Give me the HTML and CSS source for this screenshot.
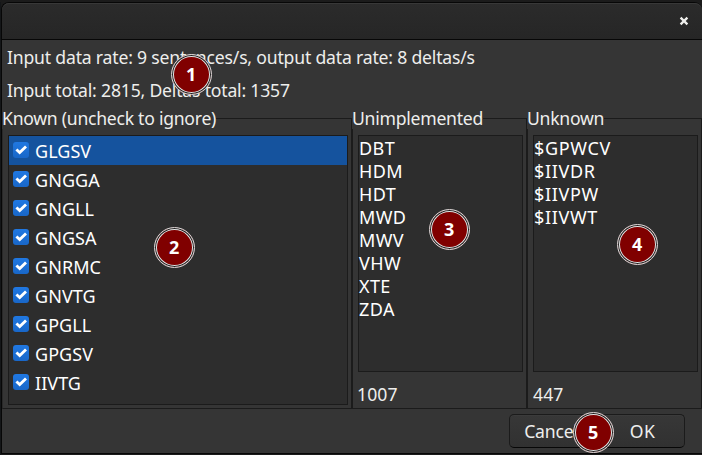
FILE: index.html
```html
<!DOCTYPE html>
<html lang="en">
<head>
<meta charset="utf-8">
<title>NMEA sentences</title>
<link rel="stylesheet" href="styles.css">
</head>
<body>
<div class="edge"></div>
<main class="dialog">
  <header class="titlebar">
    <svg class="close" viewBox="0 0 10 10"><path d="M1.6 1.6 8.4 8.4M8.4 1.6 1.6 8.4"/></svg>
  </header>
  <div class="stats">
    <p>Input data rate: 9 sentences/s, output data rate: 8 deltas/s</p>
    <p>Input total: 2815, Deltas total: 1357</p>
  </div>
  <div class="frames">
    <section class="frame known">
      <h2>Known (uncheck to ignore)</h2>
      <ul class="list checks">
        <li class="selected"><svg class="check" viewBox="0 0 16 16"><path d="M3.4 7.5 6.7 10.6 13 4.4"/></svg>GLGSV</li>
        <li><svg class="check" viewBox="0 0 16 16"><path d="M3.4 7.5 6.7 10.6 13 4.4"/></svg>GNGGA</li>
        <li><svg class="check" viewBox="0 0 16 16"><path d="M3.4 7.5 6.7 10.6 13 4.4"/></svg>GNGLL</li>
        <li><svg class="check" viewBox="0 0 16 16"><path d="M3.4 7.5 6.7 10.6 13 4.4"/></svg>GNGSA</li>
        <li><svg class="check" viewBox="0 0 16 16"><path d="M3.4 7.5 6.7 10.6 13 4.4"/></svg>GNRMC</li>
        <li><svg class="check" viewBox="0 0 16 16"><path d="M3.4 7.5 6.7 10.6 13 4.4"/></svg>GNVTG</li>
        <li><svg class="check" viewBox="0 0 16 16"><path d="M3.4 7.5 6.7 10.6 13 4.4"/></svg>GPGLL</li>
        <li><svg class="check" viewBox="0 0 16 16"><path d="M3.4 7.5 6.7 10.6 13 4.4"/></svg>GPGSV</li>
        <li><svg class="check" viewBox="0 0 16 16"><path d="M3.4 7.5 6.7 10.6 13 4.4"/></svg>IIVTG</li>
      </ul>
    </section>
    <section class="frame">
      <h2>Unimplemented</h2>
      <ul class="list">
        <li>DBT</li><li>HDM</li><li>HDT</li><li>MWD</li><li>MWV</li><li>VHW</li><li>XTE</li><li>ZDA</li>
      </ul>
      <p class="count">1007</p>
    </section>
    <section class="frame">
      <h2>Unknown</h2>
      <ul class="list unknown">
        <li>$GPWCV</li><li>$IIVDR</li><li>$IIVPW</li><li>$IIVWT</li>
      </ul>
      <p class="count">447</p>
    </section>
  </div>
  <footer class="actions">
    <div class="buttons"><button>Cancel</button><button>OK</button></div>
  </footer>
</main>
<b class="pin p1">1</b>
<b class="pin p2">2</b>
<b class="pin p3">3</b>
<b class="pin p4">4</b>
<b class="pin p5">5</b>
</body>
</html>
```
FILE: styles.css
```css
* { box-sizing: border-box; }
body {
  position: relative;
  display: flex;
  width: 702px;
  height: 455px;
  margin: 0;
  padding-top: 2px;
  overflow: hidden;
  background: #1b1b1b;
  color: #eeeeec;
  font: 17.6px/22px "Noto Sans", sans-serif;
  letter-spacing: -0.19px;
}
h2, p, ul { margin: 0; padding: 0; font-size: inherit; font-weight: normal; list-style: none; }
.edge {
  width: 1px;
  height: 453px;
  background: #141618;
}
.dialog {
  display: flex;
  flex-direction: column;
  width: 701px;
  height: 452px;
  border: 1px solid #070707;
  border-right: 0;
  border-radius: 8px 8px 0 0;
  background: #353535;
}
.titlebar {
  display: flex;
  align-items: center;
  justify-content: flex-end;
  height: 37px;
  padding: 0 13px 2px 0;
  border-top: 1px solid #383838;
  border-bottom: 1px solid #070707;
  border-radius: 7px 7px 0 0;
  background: linear-gradient(#2b2b2b, #262626);
}
.close { width: 10px; height: 10px; fill: none; stroke: #eeeeec; stroke-width: 2.3; }
.stats { height: 78px; padding: 6px 0 0 5px; }
.stats p { height: 33px; white-space: nowrap; }
.frames { display: grid; grid-template-columns: 350px 175px 175px; height: 290px; }
.frame {
  display: flex;
  flex-direction: column;
  padding: 0 3px 3px 5px;
  border: 1px solid #1b1b1b;
}
.known { border-left-color: #292929; }
.frame h2 {
  align-self: flex-start;
  height: 22px;
  margin: -12px 0 6px -6px;
  background: #353535;
  letter-spacing: -0.26px;
  white-space: nowrap;
}
.list {
  height: 237px;
  padding-top: 1px;
  border: 1px solid #1b1b1b;
  background: #2d2d2d;
  color: #fff;
  font-size: 18px;
  letter-spacing: 0.4px;
}
.list li { height: 23px; line-height: 23px; }
.unknown { letter-spacing: 0.65px; }
.checks { height: 270px; padding: 0; letter-spacing: 0.05px; }
.checks li { display: flex; align-items: center; height: 29px; padding: 1px 0 0 4px; }
.checks .selected { background: #15539e; }
.check {
  width: 16px;
  height: 16px;
  margin: -3px 6px 0 0;
  border-radius: 3px;
  background: linear-gradient(#2078e2, #1967c8);
  fill: none;
  stroke: #fff;
  stroke-width: 2.8;
}
.count { margin: 11px 0 0 -1px; letter-spacing: 0.1px; }
.unknown + .count { margin-left: 0; }
.actions { display: flex; justify-content: flex-end; padding: 6px 17px 0 0; }
.buttons {
  display: grid;
  grid-template-columns: 82px 1fr;
  width: 176px;
  height: 34px;
  border: 1px solid #1b1b1b;
  border-bottom-color: #070707;
  border-radius: 5px;
  background: linear-gradient(#373737, #313131);
  box-shadow: inset 0 1px #3b3b3b;
}
button { padding: 0; border: 0; background: none; color: inherit; font: inherit; letter-spacing: inherit; }
button:last-child { padding-left: 9px; letter-spacing: 0.4px; }
.pin {
  position: absolute;
  width: 41px;
  height: 41px;
  border: 1px solid #d8d8d8;
  border-radius: 50%;
  background: #800000;
  box-shadow: inset 0 0 0 1px #202020, inset 0 0 0 2px #e4e4e4;
  color: #fff;
  font: bold 18px/39px "Noto Sans", sans-serif;
  text-align: center;
}
.p1 { left: 170.5px; top: 53.5px; }
.p2 { left: 153.5px; top: 226.5px; }
.p3 { left: 428.5px; top: 208.5px; }
.p4 { left: 616.5px; top: 223.5px; }
.p5 { left: 572.5px; top: 411.5px; }
```
